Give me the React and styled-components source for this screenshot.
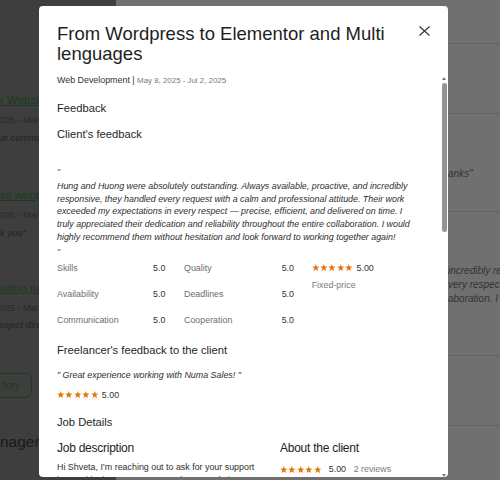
import React from "react";
import styled, { createGlobalStyle } from "styled-components";

const GlobalStyle = createGlobalStyle`
  html, body { margin: 0; padding: 0; }
  body {
    font-family: "Liberation Sans", Arial, sans-serif;
    background: #fff;
    overflow: hidden;
  }
  #root { width: 500px; height: 480px; }
`;

/* ---------- page behind the dialog ---------- */

const Page = styled.div`
  position: relative;
  width: 500px;
  height: 480px;
  overflow: hidden;
  display: grid;
  grid-template-columns: 116px 1fr;
`;

const LeftPanel = styled.div`
  background: #8e8e8e;
  min-width: 0;
  overflow: hidden;
`;

const LeftList = styled.div`
  width: 40px;
  padding-top: 93px;
  white-space: nowrap;
  overflow: hidden;
`;

const WorkItem = styled.div`
  margin-bottom: ${(p) => p.$space}px;
`;

const WorkLink = styled.a`
  display: block;
  font-size: 11.5px;
  line-height: 14px;
  color: #3f873f;
  text-decoration: underline;
`;

const WorkDate = styled.div`
  margin-top: 7px;
  font-size: 9px;
  line-height: 12px;
  color: #5d5d5d;
`;

const WorkNote = styled.div`
  margin-top: 5.5px;
  font-size: 9.5px;
  line-height: 12px;
  font-style: italic;
  color: #4d4d4d;
`;

const OutlineButton = styled.button`
  display: block;
  height: 25px;
  margin-left: -9px;
  padding: 0 11px;
  border: 1.5px solid #3f873f;
  border-radius: 7px;
  background: transparent;
  font-family: inherit;
  font-size: 10px;
  color: #3f873f;
`;

const PanelHeading = styled.div`
  margin-top: 35.5px;
  font-size: 15.5px;
  line-height: 18px;
  color: #3b3b3b;
`;

const RightPanel = styled.div`
  background: #fff;
  min-width: 0;
`;

const RightColumn = styled.div`
  margin-left: 332px;
  white-space: nowrap;
  overflow: hidden;
`;

const Section = styled.div`
  box-sizing: border-box;
  height: ${(p) => p.$h}px;
  padding-top: ${(p) => p.$pt || 0}px;
  border-top: ${(p) => (p.$line ? "1px solid #e2e2e2" : "none")};
`;

const SideNote = styled.div`
  font-size: 10px;
  line-height: 14px;
  font-style: italic;
  color: #777;
`;

const Overlay = styled.div`
  position: absolute;
  inset: 0;
  background: rgba(0, 0, 0, 0.56);
`;

/* ---------- dialog ---------- */

const Modal = styled.div`
  position: absolute;
  left: 39px;
  top: 6px;
  width: 409px;
  height: 471px;
  box-sizing: border-box;
  padding: 18px 0 0 18px;
  background: #fff;
  border-radius: 4px;
  overflow: hidden;
  color: #222;
`;

const Header = styled.div`
  display: flex;
  align-items: flex-start;
  gap: 20px;
  padding-right: 18px;
`;

const Title = styled.h2`
  flex: 1;
  margin: 0;
  font-size: 18.5px;
  line-height: 20px;
  font-weight: 400;
  color: #1e1e1e;
`;

const CloseButton = styled.button`
  display: flex;
  width: 11px;
  height: 10px;
  margin-top: 2px;
  padding: 0;
  border: 0;
  background: none;
  color: #333;
`;

const Meta = styled.div`
  margin-top: 10px;
  font-size: 8.9px;
  line-height: 12px;
  color: #333;
`;

const MetaDate = styled.span`
  font-size: 7.9px;
  color: #7a7a7a;
`;

const Body = styled.div`
  padding-right: 31px;
`;

const Heading = styled.h3`
  margin: ${(p) => p.$mt}px 0 0;
  font-size: 11.2px;
  line-height: 14px;
  font-weight: 400;
  color: #262626;
`;

const QuoteMark = styled.div`
  margin-top: ${(p) => p.$mt}px;
  font-size: 8.9px;
  line-height: 12px;
  font-style: italic;
  color: #555;
`;

const Review = styled.p`
  margin: 1.8px 0 0;
  font-size: 8.9px;
  line-height: 12.8px;
  font-style: italic;
  color: #2e2e2e;
`;

const Ratings = styled.div`
  margin-top: 4px;
  display: grid;
  grid-template-columns: 96px 31px 97.7px 30px 1fr;
  grid-auto-rows: 12px;
  row-gap: 13.8px;
  font-size: 8.9px;
  line-height: 12px;
`;

const RateLabel = styled.span`
  color: #6e6e6e;
`;

const RateValue = styled.span`
  color: #333;
`;

const ScoreCell = styled.div`
  grid-column: 5;
  grid-row: 1 / span 3;
  display: flex;
  flex-direction: column;
  gap: 5px;
`;

const ScoreRow = styled.div`
  display: flex;
  align-items: center;
  gap: ${(p) => p.$gap || 3.7}px;
  height: 12px;
  margin-top: ${(p) => p.$mt || 0}px;
  font-size: 8.9px;
  line-height: 12px;
  color: #333;
`;

const Muted = styled.span`
  font-size: 8.9px;
  line-height: 12px;
  color: #7a7a7a;
`;

const StarGroup = styled.span`
  display: inline-flex;
  gap: 0.8px;
  color: #e5760e;
`;

const FreelancerQuote = styled.div`
  margin-top: 12px;
  font-size: 8.9px;
  line-height: 12px;
  font-style: italic;
  color: #2e2e2e;
`;

const Columns = styled.div`
  margin-top: 12px;
  display: grid;
  grid-template-columns: 202px 1fr;
  column-gap: 21px;
`;

const ColTitle = styled.h4`
  margin: 0;
  font-size: 12px;
  line-height: 15px;
  font-weight: 400;
  letter-spacing: -0.25px;
  color: #222;
`;

const BodyText = styled.p`
  margin: 5.5px 0 0;
  font-size: 8.9px;
  line-height: 12.8px;
  color: #2e2e2e;
`;

/* fake scrollbar lying over the dialog's right edge */
const ScrollBar = styled.div`
  position: absolute;
  top: 69px;
  bottom: 0;
  right: 0;
  width: 8px;
  display: flex;
  flex-direction: column;
  align-items: center;
`;

const Arrow = styled.span`
  width: 0;
  height: 0;
  margin-top: ${(p) => (p.$down ? "auto" : "1.7px")};
  margin-bottom: ${(p) => (p.$down ? "0.5px" : "0")};
  border-left: 2.75px solid transparent;
  border-right: 2.75px solid transparent;
  ${(p) =>
    p.$down
      ? "border-top: 3.6px solid #777;"
      : "border-bottom: 3.6px solid #777;"}
`;

const Thumb = styled.span`
  width: 5px;
  height: 149px;
  margin-top: 3.5px;
  border-radius: 3px;
  background: #939393;
`;

const Star = () => (
  <svg width="7.6" height="7.3" viewBox="0 0 10 9.6" aria-hidden="true">
    <path
      d="M5 0 L6.2 3.4 L9.8 3.5 L7 5.7 L8 9.3 L5 7.3 L2 9.3 L3 5.7 L0.2 3.5 L3.8 3.4 Z"
      fill="currentColor"
    />
  </svg>
);

const Stars = () => (
  <StarGroup>
    <Star />
    <Star />
    <Star />
    <Star />
    <Star />
  </StarGroup>
);

const ratingRows = [
  ["Skills", "5.0", "Quality", "5.0"],
  ["Availability", "5.0", "Deadlines", "5.0"],
  ["Communication", "5.0", "Cooperation", "5.0"],
];

export default function App() {
  return (
    <>
      <GlobalStyle />
      <Page>
        <LeftPanel>
          <LeftList>
            <WorkItem $space={44.8}>
              <WorkLink>r Website</WorkLink>
              <WorkDate>026 - Mar 2</WorkDate>
              <WorkNote>at commun</WorkNote>
            </WorkItem>
            <WorkItem $space={41.8}>
              <WorkLink>ss webpa</WorkLink>
              <WorkDate>026 - Mar 2</WorkDate>
              <WorkNote>k you"</WorkNote>
            </WorkItem>
            <WorkItem $space={41.8}>
              <WorkLink>isting pag</WorkLink>
              <WorkDate>025 - Mar 2</WorkDate>
              <WorkNote>roject direc</WorkNote>
            </WorkItem>
            <OutlineButton>tory</OutlineButton>
            <PanelHeading>nager</PanelHeading>
          </LeftList>
        </LeftPanel>
        <RightPanel>
          <RightColumn>
            <Section $h={43} />
            <Section $h={70} $line />
            <Section $h={98} $line $pt={53}>
              <SideNote>anks"</SideNote>
            </Section>
            <Section $h={144} $line $pt={52}>
              <SideNote>incredibly res</SideNote>
              <SideNote>very respect</SideNote>
              <SideNote>aboration. I w</SideNote>
            </Section>
            <Section $h={70} $line />
            <Section $h={60} $line />
          </RightColumn>
        </RightPanel>
        <Overlay />
        <Modal role="dialog">
          <Header>
            <Title>From Wordpress to Elementor and Multi lenguages</Title>
            <CloseButton aria-label="Close">
              <svg width="11" height="10" viewBox="0 0 11 10">
                <path
                  d="M0.5 0.5 L10.5 9.5 M10.5 0.5 L0.5 9.5"
                  stroke="currentColor"
                  strokeWidth="1.1"
                  fill="none"
                />
              </svg>
            </CloseButton>
          </Header>
          <Meta>
            Web Development | <MetaDate>May 8, 2025 - Jul 2, 2025</MetaDate>
          </Meta>
          <Body>
            <Heading $mt={13.5}>Feedback</Heading>
            <Heading $mt={12.5}>Client's feedback</Heading>
            <QuoteMark $mt={25}>"</QuoteMark>
            <Review>
              Hung and Huong were absolutely outstanding. Always available,
              proactive, and incredibly responsive, they handled every request
              with a calm and professional attitude. Their work exceeded my
              expectations in every respect — precise, efficient, and delivered
              on time. I truly appreciated their dedication and reliability
              throughout the entire collaboration. I would highly recommend them
              without hesitation and look forward to working together again!
            </Review>
            <QuoteMark $mt={2.2}>"</QuoteMark>
            <Ratings>
              {ratingRows.map((r) => (
                <React.Fragment key={r[0]}>
                  <RateLabel>{r[0]}</RateLabel>
                  <RateValue>{r[1]}</RateValue>
                  <RateLabel>{r[2]}</RateLabel>
                  <RateValue>{r[3]}</RateValue>
                </React.Fragment>
              ))}
              <ScoreCell>
                <ScoreRow>
                  <Stars />
                  <span>5.00</span>
                </ScoreRow>
                <Muted>Fixed-price</Muted>
              </ScoreCell>
            </Ratings>
            <Heading $mt={17.8}>Freelancer's feedback to the client</Heading>
            <FreelancerQuote>" Great experience working with Numa Sales! "</FreelancerQuote>
            <ScoreRow $mt={7.6}>
              <Stars />
              <span>5.00</span>
            </ScoreRow>
            <Heading $mt={14}>Job Details</Heading>
            <Columns>
              <div>
                <ColTitle>Job description</ColTitle>
                <BodyText>
                  Hi Shveta, I’m reaching out to ask for your support in
                  transitioning my current WordPress website to Elementor and
                  making it available in multiple languages.
                </BodyText>
              </div>
              <div>
                <ColTitle>About the client</ColTitle>
                <ScoreRow $mt={7.3} $gap={7.6}>
                  <Stars />
                  <span>5.00</span>
                  <Muted>2 reviews</Muted>
                </ScoreRow>
              </div>
            </Columns>
          </Body>
          <ScrollBar aria-hidden="true">
            <Arrow />
            <Thumb />
            <Arrow $down />
          </ScrollBar>
        </Modal>
      </Page>
    </>
  );
}
